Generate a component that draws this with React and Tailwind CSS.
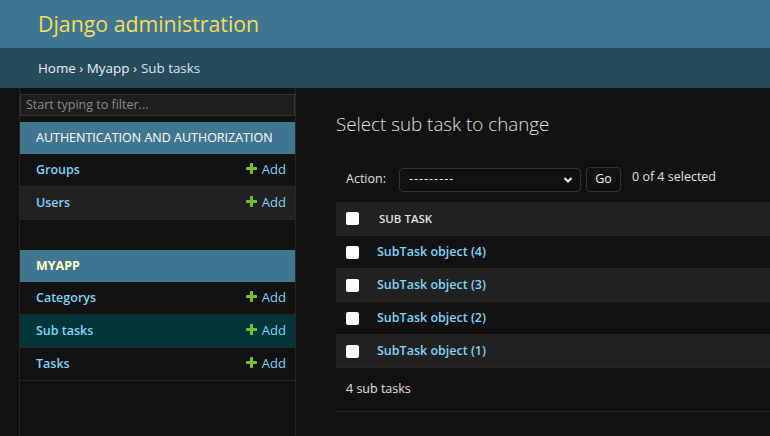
import React from 'react';

const FONT = { fontFamily: '"Segoe UI", "Open Sans", sans-serif' };

function AddIcon() {
  return (
    <svg width="11" height="11" viewBox="192 192 1408 1408" className="mr-[5px] -mt-[3px]">
      <path
        fill="#70bf2b"
        d="M1600 796v192q0 40-28 68t-68 28h-416v416q0 40-28 68t-68 28h-192q-40 0-68-28t-28-68v-416h-416q-40 0-68-28t-28-68v-192q0-40 28-68t68-28h416v-416q0-40 28-68t68-28h192q40 0 68 28t28 68v416h416q40 0 68 28t28 68z"
      />
    </svg>
  );
}

function SidebarRow({ name, striped, selected }) {
  let bg = 'bg-[#121212]';
  if (striped) bg = 'bg-[#212121]';
  if (selected) bg = 'bg-[#00363a]';
  return (
    <div className={`h-[33px] flex items-center justify-between pl-[16px] pr-[9px] border-b border-[#272727] ${bg}`}>
      <span className="text-[12.5px] font-semibold text-[#81d4fa]">{name}</span>
      <span className="flex items-center text-[13px] text-[#81d4fa]">
        <AddIcon />
        Add
      </span>
    </div>
  );
}

function Checkbox() {
  return <span className="inline-block w-[13px] h-[13px] bg-white rounded-[2px]" />;
}

function TableRow({ label, striped }) {
  return (
    <div className={`h-[33px] flex items-center pl-[10px] border-b border-[#272727] ${striped ? 'bg-[#212121]' : 'bg-[#121212]'}`}>
      <Checkbox />
      <span className="ml-[18px] text-[12.5px] font-semibold text-[#81d4fa]">{label}</span>
    </div>
  );
}

export default function App() {
  const rows = ['SubTask object (4)', 'SubTask object (3)', 'SubTask object (2)', 'SubTask object (1)'];

  return (
    <div className="w-[770px] h-[436px] overflow-hidden bg-[#121212] text-[#eeeeee]" style={FONT}>
      {/* Header */}
      <div className="h-[48px] bg-[#417690] flex items-center px-[38px]">
        <span className="text-[21.3px] text-[#f5dd5d]">Django administration</span>
      </div>

      {/* Breadcrumbs */}
      <div className="h-[40px] bg-[#264b5d] flex items-center px-[38px] text-[13.4px] text-[#eeeeee]">
        Home › Myapp › <span className="ml-[4px] text-[#d6e6ee]">Sub tasks</span>
      </div>

      <div className="flex h-[348px]">
        {/* toggle column */}
        <div className="w-[20px] border-r border-[#272727]" />

        {/* Sidebar */}
        <div className="w-[276px] border-r border-[#272727] pt-[6px]">
          <div className="h-[22px] border border-[#353535] bg-[#1e1e1e] flex items-center pl-[5px] text-[12.5px] text-[#8a8a8a]">
            Start typing to filter...
          </div>

          <div className="mt-[6px]">
            <div className="h-[32px] bg-[#417690] flex items-center pl-[16px] pt-[1px] text-[12.5px] text-white">
              AUTHENTICATION AND AUTHORIZATION
            </div>
            <SidebarRow name="Groups" />
            <SidebarRow name="Users" striped />
          </div>

          <div className="mt-[30px]">
            <div className="h-[32px] bg-[#417690] flex items-center pl-[16px] pt-[1px] text-[12.5px] font-bold text-[#ffffcc]">
              MYAPP
            </div>
            <SidebarRow name="Categorys" />
            <SidebarRow name="Sub tasks" selected />
            <SidebarRow name="Tasks" />
          </div>
        </div>

        {/* Content */}
        <div className="flex-1 pl-[40px]">
          <h1 className="mt-[22px] text-[18.8px] font-light text-[#e0e0e0] leading-[28px]">
            Select sub task to change
          </h1>

          <div className="mt-[29px] flex items-center pl-[10px] text-[12.5px]">
            <span className="w-[53px] text-[#e0e0e0]">Action:</span>
            <div className="w-[182px] h-[24px] border border-[#353535] rounded-[4px] flex items-center justify-between pl-[9px] pr-[7px]">
              <span className="tracking-[1px]">---------</span>
              <svg width="10" height="8" viewBox="0 0 10 8">
                <path d="M1.5 2 L5 5.5 L8.5 2" stroke="#eeeeee" strokeWidth="2" fill="none" />
              </svg>
            </div>
            <div className="ml-[5px] w-[35px] h-[25px] border border-[#353535] rounded-[4px] flex items-center justify-center">
              Go
            </div>
            <span className="ml-[11px] -mt-[4px] text-[#e0e0e0]">0 of 4 selected</span>
          </div>

          <div className="mt-[10px]">
            <div className="h-[34px] flex items-center pl-[10px] bg-[#212121] border-b border-[#272727]">
              <Checkbox />
              <span className="ml-[20px] text-[11.5px] font-semibold text-[#e0e0e0]">SUB TASK</span>
            </div>
            {rows.map((r, i) => (
              <TableRow key={r} label={r} striped={i % 2 === 1} />
            ))}
          </div>

          <div className="h-[44px] flex items-center pl-[10px] text-[12.5px] text-[#e0e0e0] border-b border-[#272727]">
            4 sub tasks
          </div>
        </div>
      </div>
    </div>
  );
}
